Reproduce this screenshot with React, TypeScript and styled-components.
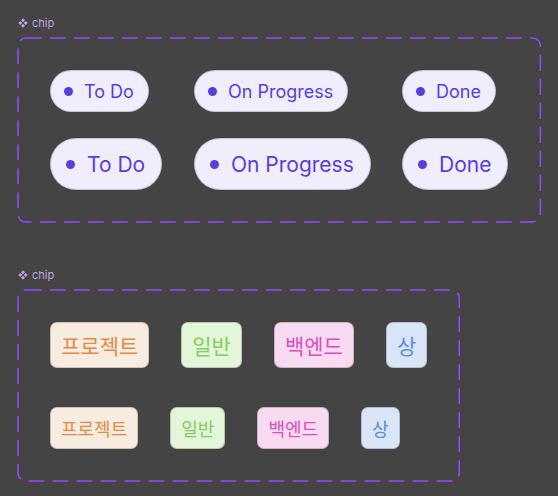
import React from "react";
import styled, { createGlobalStyle } from "styled-components";

const GlobalStyle = createGlobalStyle`
  html, body {
    margin: 0;
    background: #444444;
  }
  body {
    font-family: Inter, "Noto Sans", sans-serif;
  }
`;

const Page = styled.div`
  display: flex;
  flex-direction: column;
  align-items: flex-start;
  padding: 16px 18px;
  gap: 46px;
`;

const Section = styled.section`
  display: flex;
  flex-direction: column;
  align-items: flex-start;
  gap: 8px;
`;

const Label = styled.div`
  display: flex;
  align-items: center;
  gap: 4px;
  height: 14px;
  font-family: Inter, sans-serif;
  font-size: 11px;
  color: #bfa3e3;
`;

const Frame = styled.div`
  position: relative;
  padding: 32px;
`;

const Outline = styled.svg`
  position: absolute;
  inset: 0;
  width: 100%;
  height: 100%;
  overflow: visible;
  pointer-events: none;
`;

const StatusGrid = styled.div`
  display: grid;
  grid-template-columns: 144px 208px auto;
  row-gap: 26px;
  justify-items: start;
`;

const StatusChip = styled.div<{ $big?: boolean }>`
  display: flex;
  align-items: center;
  box-sizing: border-box;
  height: ${(p) => (p.$big ? 52 : 42)}px;
  padding: ${(p) => (p.$big ? "0 16px 0 15px" : "0 14px 0 13px")};
  gap: ${(p) => (p.$big ? 12 : 11)}px;
  border-radius: 999px;
  background: #f0eefc;
  border: 1px solid rgba(0, 0, 0, 0.18);
  color: #5a3cdb;
  font-family: Inter, sans-serif;
  font-size: ${(p) => (p.$big ? 21 : 18)}px;
  white-space: nowrap;
`;

const Dot = styled.span`
  width: 9px;
  height: 9px;
  border-radius: 50%;
  background: #5a3cdb;
  flex: none;
`;

const TagColumn = styled.div`
  display: flex;
  flex-direction: column;
  gap: 39px;
`;

const TagRow = styled.div`
  display: flex;
  align-items: center;
  gap: 32px;
`;

type Tone = "orange" | "green" | "pink" | "blue";

const tones: Record<Tone, { bg: string; fg: string }> = {
  orange: { bg: "#f8ece1", fg: "#e38b45" },
  green: { bg: "#e3f6d9", fg: "#84cc63" },
  pink: { bg: "#f8dbf0", fg: "#d94ec1" },
  blue: { bg: "#dae6f8", fg: "#5b8ce0" },
};

const Tag = styled.div<{ $tone: Tone; $big?: boolean }>`
  display: flex;
  align-items: center;
  box-sizing: border-box;
  height: ${(p) => (p.$big ? 46 : 42)}px;
  padding: 0 10px;
  border-radius: 7px;
  background: ${(p) => tones[p.$tone].bg};
  border: 1px solid rgba(0, 0, 0, 0.18);
  color: ${(p) => tones[p.$tone].fg};
  font-family: "Noto Sans CJK KR", "Noto Sans", sans-serif;
  font-size: ${(p) => (p.$big ? 21 : 18)}px;
  white-space: nowrap;
`;

const ComponentIcon = () => (
  <svg width="10" height="10" viewBox="0 0 10 10" fill="#bfa3e3">
    <path d="M5 0.3 L7 2.3 L5 4.3 L3 2.3 Z" />
    <path d="M5 5.7 L7 7.7 L5 9.7 L3 7.7 Z" />
    <path d="M2.3 3 L4.3 5 L2.3 7 L0.3 5 Z" />
    <path d="M7.7 3 L9.7 5 L7.7 7 L5.7 5 Z" />
  </svg>
);

const DashedOutline = () => (
  <Outline>
    <rect
      x="0"
      y="0"
      width="100%"
      height="100%"
      rx="8"
      fill="none"
      stroke="#9747ff"
      strokeWidth="1.5"
      strokeDasharray="16 8"
    />
  </Outline>
);

const statuses = ["To Do", "On Progress", "Done"];

const tags: { text: string; tone: Tone }[] = [
  { text: "프로젝트", tone: "orange" },
  { text: "일반", tone: "green" },
  { text: "백엔드", tone: "pink" },
  { text: "상", tone: "blue" },
];

export default function App() {
  return (
    <>
      <GlobalStyle />
      <Page>
        <Section>
          <Label>
            <ComponentIcon />
            chip
          </Label>
          <Frame>
            <DashedOutline />
            <StatusGrid>
              {statuses.map((s) => (
                <StatusChip key={s}>
                  <Dot />
                  {s}
                </StatusChip>
              ))}
              {statuses.map((s) => (
                <StatusChip key={s + "-big"} $big>
                  <Dot />
                  {s}
                </StatusChip>
              ))}
            </StatusGrid>
          </Frame>
        </Section>

        <Section>
          <Label>
            <ComponentIcon />
            chip
          </Label>
          <Frame>
            <DashedOutline />
            <TagColumn>
              <TagRow>
                {tags.map((t) => (
                  <Tag key={t.text} $tone={t.tone} $big>
                    {t.text}
                  </Tag>
                ))}
              </TagRow>
              <TagRow>
                {tags.map((t) => (
                  <Tag key={t.text} $tone={t.tone}>
                    {t.text}
                  </Tag>
                ))}
              </TagRow>
            </TagColumn>
          </Frame>
        </Section>
      </Page>
    </>
  );
}
